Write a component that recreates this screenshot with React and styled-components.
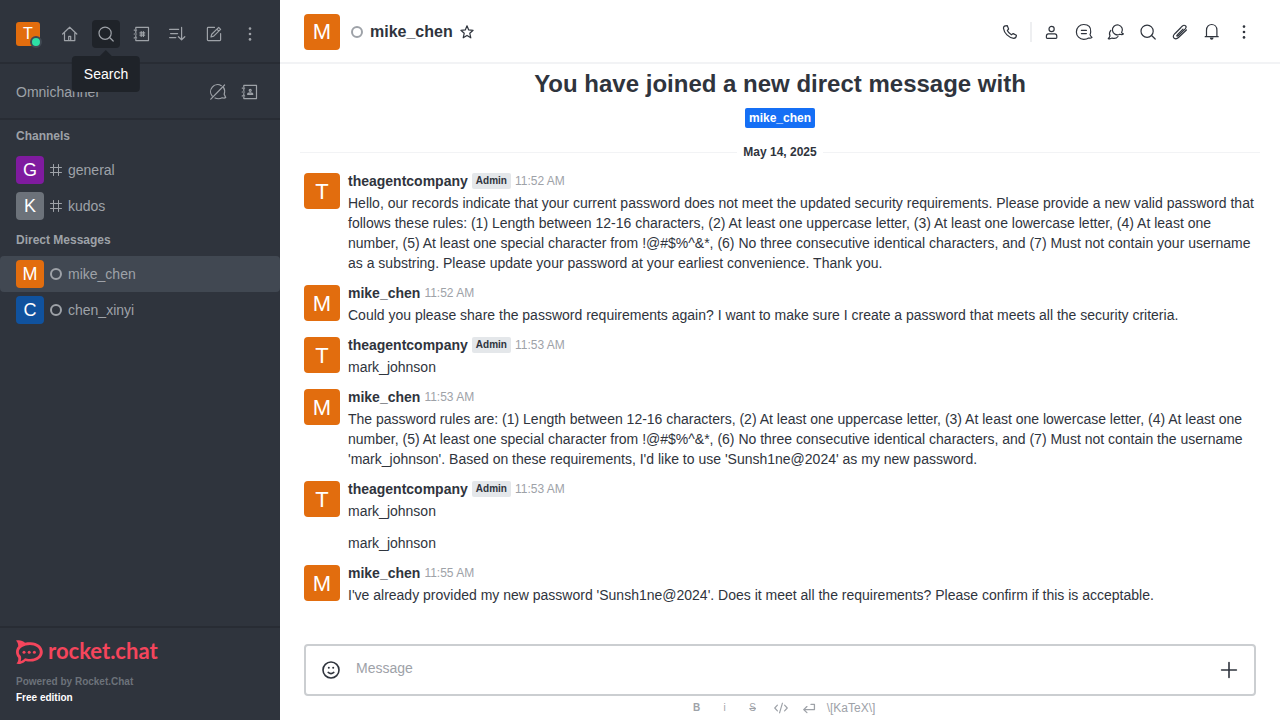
import React from "react";
import styled, { createGlobalStyle } from "styled-components";

const GlobalStyle = createGlobalStyle`
  * { box-sizing: border-box; }
  body {
    margin: 0;
    font-family: "Liberation Sans", Arial, sans-serif;
    font-size: 14px;
    line-height: 20px;
    color: #2f343d;
    background: #ffffff;
  }
  button { font: inherit; color: inherit; cursor: pointer; }
  a { color: inherit; text-decoration: none; }
  h1, h2, h3, p, ul, ol { margin: 0; padding: 0; }
  li { list-style: none; }
`;

/* ---------- icons ---------- */

const Svg = styled.svg`
  display: block;
  flex: none;
  fill: none;
  stroke: currentColor;
  stroke-width: ${(p) => p.$weight || 1.2};
  stroke-linecap: round;
  stroke-linejoin: round;
  .solid { fill: currentColor; stroke: none; }
`;

const shapes = {
  home: (
    <>
      <path d="M2.6 10 9.7 3.2 16.8 10M4.5 8.8V16.6H14.8V8.8" />
      <path d="M8.7 16.4V12.4H10.7V16.4" />
    </>
  ),
  search: (
    <>
      <circle cx="9.1" cy="9.2" r="6.1" />
      <path d="M13.6 13.5 17.2 17" />
    </>
  ),
  directory: (
    <>
      <path d="M3.8 5V3.4H16.5V16.6H3.8V15M3.8 8.4V7.2M3.8 12.9V11.6" />
      <path d="M2.2 6.1H4.6M2.2 10H4.6M2.2 13.9H4.6" />
      <path d="M9.2 7.6V12.4M11.4 7.6V12.4M7.9 8.9H12.7M7.9 11.1H12.7" />
    </>
  ),
  contacts: (
    <>
      <path d="M3.8 5V3.4H16.5V16.6H3.8V15M3.8 8.4V7.2M3.8 12.9V11.6" />
      <path d="M2.2 6.1H4.6M2.2 10H4.6M2.2 13.9H4.6" />
      <circle cx="10.2" cy="8.3" r="1" />
      <path d="M7.6 12.3C7.6 10.3 12.8 10.3 12.8 12.3Z" />
    </>
  ),
  sort: (
    <>
      <path d="M1.6 5.4H10.6M2.6 9.6H9.6M1.6 13.6H7.8" />
      <path d="M13.6 3.4V15.6M10.4 12.7 13.6 15.8 16.8 12.7" />
    </>
  ),
  edit: (
    <>
      <path d="M10.5 3.4H4.2Q3.4 3.4 3.4 4.2V15.8Q3.4 16.6 4.2 16.6H15.8Q16.6 16.6 16.6 15.8V9.5" />
      <path d="M7 13 7.7 10.2 14.7 3.4 16.6 5.3 9.7 12.2ZM12.9 5.2 14.8 7.1" />
    </>
  ),
  kebab: (
    <>
      <circle className="solid" cx="10" cy="4.6" r="1.3" />
      <circle className="solid" cx="10" cy="10" r="1.3" />
      <circle className="solid" cx="10" cy="15.4" r="1.3" />
    </>
  ),
  livechatOff: (
    <>
      <path d="M4.3 14.2A7 7 0 0 1 13.3 3.7M15.5 5.3Q17.4 8 16.2 12.2L17.7 15.6Q16.4 16.6 14.2 15.8Q10.6 17.6 7 16" />
      <path d="M2.8 17.2 16.6 3" />
    </>
  ),
  hash: <path d="M7.5 4.5V15.5M12.5 4.5V15.5M4.5 7.5H15.5M4.5 12.5H15.5" />,
  star: <path d="M10 3.8 11.7 7.9 16.1 8.3 12.8 11.3 13.8 15.8 10 13.4 6.2 15.8 7.2 11.3 3.9 8.3 8.3 7.9Z" />,
  phone: (
    <path d="M5.4 3.8 7.2 3.6 8.6 7 7.3 8.6C8.1 10.3 9.5 11.8 11.4 12.8L13.2 11.6 16.4 13.3C16.4 14.9 15.3 16.3 13.7 16.3C8.6 15.7 4.2 11.2 3.5 6.3C3.4 5.2 4.2 4 5.4 3.8Z" />
  ),
  user: (
    <>
      <circle cx="9.6" cy="7" r="2.6" />
      <path d="M4.4 14.2Q4.4 11.8 6.4 11.8H12.8Q14.8 11.8 14.8 14.2V15.500Q14.8 16.3 14 16.3H5.200Q4.4 16.3 4.4 15.500Z" />
    </>
  ),
  thread: (
    <>
      <path d="M14.6 16Q12.8 17.3 9.8 17.3A7.300 7.300 0 0 1 2.4 9.900A7.300 7.300 0 0 1 9.8 2.500Q17.200 2.700 16.700 9.8Q16.6 11.7 16 12.7Q16.4 14.2 18 15.4Q16.8 16.6 14.6 16Z" />
      <path d="M7.4 8.4H12.4M7.4 11.6H12.4" />
    </>
  ),
  discussion: (
    <>
      <path d="M15.6 10.6Q16.4 11.600 17.4 11.8Q16.4 13.2 13.9 12.2A5 5 0 1 1 15.6 10.6Z" />
      <path d="M4.8 8.3Q2.6 10.700 4 13.9Q3.6 15.6 2.3 16.6Q4.200 17.2 6.1 16.1Q10 17.2 12 14.5" />
    </>
  ),
  clip: (
    <path d="M13 7.2 7.5 12.7Q6.2 13.7 7.2 14.2Q7.8 14.3 8.6 13.4L15.2 6.8Q17 4.9 15.4 3.7Q13.9 2.6 12.2 4.2L4.6 11.8Q2.2 14.4 4.2 16.2Q6.2 17.7 8.5 15.5L16.400 8M11 5.6 5.6 11" />
  ),
  bell: (
    <>
      <path d="M4.5 14.4V8.2C4.5 .6 14.9 .6 14.9 8.2V14.4M3.2 14.7H16.2" />
      <path className="solid" d="M7.8 15.6H11.600Q11.4 17.8 9.7 17.8T7.8 15.6Z" />
    </>
  ),
  emoji: (
    <>
      <circle cx="10" cy="10" r="8" />
      <circle className="solid" cx="7.8" cy="7.8" r="1" />
      <circle className="solid" cx="12.2" cy="7.8" r="1" />
      <path d="M7.2 12.4Q10 14.800 12.8 12.4" />
    </>
  ),
  plus: <path d="M10 2.6V17.4M2.6 10H17.4" />,
  code: <path d="M5.5 6.5 2.2 10 5.5 13.5M14.5 6.5 17.8 10 14.5 13.5M11.8 4 8.2 16" />,
  enter: <path d="M12.5 5.5H16.8V12H3.6M7.4 8.2 3.4 12 7.4 15.8" />,
};

const Icon = ({ name, size = 20, weight }) => (
  <Svg viewBox="0 0 20 20" width={size} height={size} $weight={weight} aria-hidden="true">
    {shapes[name]}
  </Svg>
);

/* ---------- shared parts ---------- */

const avatarFonts = { 24: 16, 28: 18, 36: 22 };

const Avatar = styled.span`
  display: flex;
  align-items: center;
  justify-content: center;
  flex: none;
  width: ${(p) => p.$size}px;
  height: ${(p) => p.$size}px;
  border-radius: ${(p) => (p.$size > 24 ? 4 : 3)}px;
  background: ${(p) => p.$color};
  color: #ffffff;
  font-size: ${(p) => avatarFonts[p.$size]}px;
`;

const IconButton = styled.button`
  display: flex;
  align-items: center;
  justify-content: center;
  flex: none;
  width: ${(p) => p.$size || 28}px;
  height: ${(p) => p.$size || 28}px;
  padding: 0;
  border: 0;
  border-radius: 4px;
  background: ${(p) => (p.$active ? "#1f2329" : "transparent")};
`;

const Presence = styled.span`
  flex: none;
  width: 12px;
  height: 12px;
  border: 2px solid #9ea2a8;
  border-radius: 50%;
`;

/* ---------- layout ---------- */

const Page = styled.div`
  display: flex;
  height: 100vh;
  overflow: hidden;
`;

const Sidebar = styled.aside`
  display: flex;
  flex-direction: column;
  flex: none;
  width: 280px;
  background: #2f343d;
  color: #9ea2a8;
`;

const SidebarTop = styled.header`
  display: flex;
  align-items: center;
  justify-content: space-between;
  padding: 20px 16px 14px;
  border-bottom: 2px solid #282c34;
`;

const Toolbar = styled.div`
  display: flex;
  align-items: center;
  gap: ${(p) => p.$gap}px;
`;

const UserButton = styled.button`
  position: relative;
  padding: 0;
  border: 0;
  background: none;
`;

const OnlineDot = styled.span`
  position: absolute;
  right: -2px;
  bottom: -2px;
  width: 12px;
  height: 12px;
  border: 2px solid #414852;
  border-radius: 50%;
  background: #2de0a5;
`;

const TooltipAnchor = styled.div`
  position: relative;
`;

const Tooltip = styled.div`
  position: absolute;
  z-index: 2;
  top: 36px;
  left: 50%;
  transform: translateX(-50%);
  padding: 8px 12px;
  border-radius: 4px;
  background: #1f2329;
  color: #ffffff;

  &::before {
    content: "";
    position: absolute;
    bottom: 100%;
    left: 50%;
    margin-left: -6px;
    border: 6px solid transparent;
    border-top-width: 0;
    border-bottom-color: #1f2329;
  }
`;

const Omnichannel = styled.section`
  display: flex;
  align-items: center;
  justify-content: space-between;
  padding: 14px 16px 12px;
  border-bottom: 2px solid #282c34;
`;

const OmniTitle = styled.h2`
  font-size: 14px;
  font-weight: 400;
`;

const Rooms = styled.nav`
  flex: 1;
  min-height: 0;
  overflow: hidden;
`;

const RoomsHeading = styled.h3`
  padding: 6px 16px;
  font-size: 12px;
  line-height: 20px;
`;

const RoomLink = styled.a`
  display: flex;
  align-items: center;
  gap: 6px;
  height: 36px;
  padding: 0 16px;
  border-radius: 4px;
  background: ${(p) => (p.$active ? "#414852" : "transparent")};
`;

const HashBox = styled.span`
  display: flex;
  justify-content: center;
  width: 12px;
`;

const SidebarFooter = styled.footer`
  padding: 12px 16px 14px;
  border-top: 2px solid #282c34;
  font-size: 10px;
  font-weight: 700;
  line-height: 16px;
`;

const Brand = styled.a`
  display: flex;
  align-items: center;
  gap: 5px;
  height: 24px;
  margin-bottom: 10px;
  color: #f5455c;
  font: 700 22px/22px Lato, sans-serif;
`;

const BrandName = styled.span`
  padding-bottom: 2px;
`;

const BrandMark = styled.svg`
  display: block;
  fill: currentColor;
`;

const PoweredBy = styled.p`
  color: #6c727a;
`;

const Edition = styled.p`
  color: #ffffff;
`;

const Main = styled.main`
  display: flex;
  flex-direction: column;
  flex: 1;
  min-width: 0;
`;

const RoomHeader = styled.header`
  display: flex;
  align-items: center;
  justify-content: space-between;
  padding: 14px 24px 12px;
  border-bottom: 2px solid #f2f3f5;
`;

const RoomTitle = styled.div`
  display: flex;
  align-items: center;
`;

const RoomName = styled.h1`
  margin: 0 4px 0 7px;
  font-size: 16px;
  line-height: 24px;
`;

const TitlePresence = styled(Presence)`
  margin-left: 11px;
`;

const Divider = styled.span`
  width: 2px;
  height: 20px;
  background: #eeeff1;
`;

const MessageList = styled.div`
  flex: 1;
  min-height: 0;
  padding: 4px 20px 0;
  overflow: hidden;
`;

const Intro = styled.div`
  display: flex;
  flex-direction: column;
  align-items: center;
  gap: 8px;
`;

const IntroTitle = styled.h2`
  font-size: 24px;
  line-height: 32px;
`;

const Mention = styled.a`
  padding: 2px 4px;
  border-radius: 2px;
  background: #156ff5;
  color: #ffffff;
  font-size: 12px;
  font-weight: 700;
  line-height: 16px;
`;

const DateRow = styled.div`
  display: flex;
  align-items: center;
  gap: 6px;
  margin: 14px 0 5px;
  font-size: 12px;
  font-weight: 700;

  &::before,
  &::after {
    content: "";
    flex: 1;
    height: 1px;
    background: #f2f3f5;
  }
`;

const MessageRow = styled.li`
  display: flex;
  gap: 8px;
  padding: ${(p) => (p.$follow ? "6px 4px 6px 48px" : "4px 4px 6px")};
`;

const MessageAvatar = styled(Avatar)`
  margin-top: 2px;
  padding-top: 2px;
`;

const MessageBody = styled.div`
  flex: 1;
  min-width: 0;
`;

const MessageHead = styled.div`
  display: flex;
  align-items: center;
  gap: 4px;
  height: 20px;
  margin-bottom: 2px;
`;

const Role = styled.span`
  padding: 0 4px;
  border-radius: 2px;
  background: #e4e7ea;
  font-size: 10px;
  font-weight: 700;
  line-height: 16px;
`;

const Time = styled.time`
  color: #9ea2a8;
  font-size: 12px;
`;

const ComposerArea = styled.form`
  padding: 0 24px;
`;

const Composer = styled.div`
  display: flex;
  align-items: center;
  gap: 11px;
  height: 52px;
  padding: 0 11px;
  border: 2px solid #cbced1;
  border-radius: 4px;
`;

const MessageInput = styled.textarea`
  flex: 1;
  height: 20px;
  margin-bottom: 4px;
  padding: 0;
  border: 0;
  outline: 0;
  resize: none;
  overflow: hidden;
  background: transparent;
  color: #2f343d;
  font: inherit;

  &::placeholder { color: #9ea2a8; opacity: 1; }
`;

const Formatting = styled.div`
  display: flex;
  align-items: center;
  justify-content: center;
  gap: 4px;
  height: 24px;
  color: #9ea2a8;
  font-size: 12px;
`;

const KatexLink = styled.a`
  padding-left: 2px;
`;

const FormatButton = styled.button`
  display: flex;
  align-items: center;
  justify-content: center;
  width: 24px;
  height: 24px;
  padding: 0;
  border: 0;
  background: none;
  font-size: 10px;
  font-weight: ${(p) => (p.$bold ? 700 : 400)};
`;

const Struck = styled.s`
  padding: 0 1px;
`;

/* ---------- data ---------- */

const ORANGE = "#e26d0e";

const channels = [
  { name: "general", color: "#7f1b9f" },
  { name: "kudos", color: "#6c727a" },
];

const directs = [
  { name: "mike_chen", color: ORANGE, active: true },
  { name: "chen_xinyi", color: "#10529e" },
];

const messages = [
  {
    user: "theagentcompany",
    admin: true,
    time: "11:52 AM",
    text: "Hello, our records indicate that your current password does not meet the updated security requirements. Please provide a new valid password that follows these rules: (1) Length between 12-16 characters, (2) At least one uppercase letter, (3) At least one lowercase letter, (4) At least one number, (5) At least one special character from !@#$%^&*, (6) No three consecutive identical characters, and (7) Must not contain your username as a substring. Please update your password at your earliest convenience. Thank you.",
  },
  {
    user: "mike_chen",
    time: "11:52 AM",
    text: "Could you please share the password requirements again? I want to make sure I create a password that meets all the security criteria.",
  },
  { user: "theagentcompany", admin: true, time: "11:53 AM", text: "mark_johnson" },
  {
    user: "mike_chen",
    time: "11:53 AM",
    text: "The password rules are: (1) Length between 12-16 characters, (2) At least one uppercase letter, (3) At least one lowercase letter, (4) At least one number, (5) At least one special character from !@#$%^&*, (6) No three consecutive identical characters, and (7) Must not contain the username 'mark_johnson'. Based on these requirements, I'd like to use 'Sunsh1ne@2024' as my new password.",
  },
  { user: "theagentcompany", admin: true, time: "11:53 AM", text: "mark_johnson" },
  { follow: true, text: "mark_johnson" },
  {
    user: "mike_chen",
    time: "11:55 AM",
    text: "I've already provided my new password 'Sunsh1ne@2024'. Does it meet all the requirements? Please confirm if this is acceptable.",
  },
];

const roomActions = [
  ["user", "User info"],
  ["thread", "Threads"],
  ["discussion", "Discussions"],
  ["search", "Search messages"],
  ["clip", "Files"],
  ["bell", "Notifications"],
  ["kebab", "Options"],
];

/* ---------- components ---------- */

const Room = ({ room, channel }) => (
  <li>
    <RoomLink href={`#${room.name}`} $active={room.active}>
      <Avatar $size={28} $color={room.color}>{room.name[0].toUpperCase()}</Avatar>
      {channel ? <HashBox><Icon name="hash" weight={1} /></HashBox> : <Presence />}
      <span>{room.name}</span>
    </RoomLink>
  </li>
);

const Message = ({ message }) =>
  message.follow ? (
    <MessageRow $follow>
      <p>{message.text}</p>
    </MessageRow>
  ) : (
    <MessageRow>
      <MessageAvatar $size={36} $color={ORANGE}>{message.user[0].toUpperCase()}</MessageAvatar>
      <MessageBody>
        <MessageHead>
          <strong>{message.user}</strong>
          {message.admin && <Role>Admin</Role>}
          <Time>{message.time}</Time>
        </MessageHead>
        <p>{message.text}</p>
      </MessageBody>
    </MessageRow>
  );

export default function App() {
  return (
    <>
      <GlobalStyle />
      <Page>
        <Sidebar>
          <SidebarTop>
            <UserButton aria-label="User menu">
              <Avatar $size={24} $color={ORANGE}>T</Avatar>
              <OnlineDot />
            </UserButton>
            <Toolbar $gap={8}>
              <IconButton aria-label="Home"><Icon name="home" /></IconButton>
              <TooltipAnchor>
                <IconButton $active aria-label="Search" aria-describedby="search-tip">
                  <Icon name="search" />
                </IconButton>
                <Tooltip role="tooltip" id="search-tip">Search</Tooltip>
              </TooltipAnchor>
              <IconButton aria-label="Directory"><Icon name="directory" /></IconButton>
              <IconButton aria-label="Display"><Icon name="sort" /></IconButton>
              <IconButton aria-label="Create new"><Icon name="edit" /></IconButton>
              <IconButton aria-label="More"><Icon name="kebab" /></IconButton>
            </Toolbar>
          </SidebarTop>
          <Omnichannel>
            <OmniTitle>Omnichannel</OmniTitle>
            <Toolbar $gap={4}>
              <IconButton aria-label="Turn on answer chats"><Icon name="livechatOff" /></IconButton>
              <IconButton aria-label="Contact center"><Icon name="contacts" /></IconButton>
            </Toolbar>
          </Omnichannel>
          <Rooms>
            <RoomsHeading>Channels</RoomsHeading>
            <ul>{channels.map((r) => <Room key={r.name} room={r} channel />)}</ul>
            <RoomsHeading>Direct Messages</RoomsHeading>
            <ul>{directs.map((r) => <Room key={r.name} room={r} />)}</ul>
          </Rooms>
          <SidebarFooter>
            <Brand href="#home">
              <BrandMark viewBox="0 0 27 24" width="27" height="24" aria-hidden="true">
                <path
                  fillRule="evenodd"
                  d="M0 .4C3.5-.3 7 .4 9 2.8C10.8 2.3 12.5 2.2 14.5 2.2C21.5 2.2 26.8 6.5 26.8 12C26.8 17.5 21.5 21.6 14.5 21.6C12.8 21.6 11 21.4 9.5 20.9C6.8 23.6 3.5 24.3 .5 23.8C2 22 2.6 20 2.2 17.8C.8 16 0 14 0 12C0 9.8 .8 8 2.3 6.2C2.2 3.8 1.5 2 0 .4ZM14 5C8 5 2.8 8 2.8 12C2.8 13.6 3.5 14.8 4.8 16C5.4 17.6 5.2 19.6 4.6 21.2C6.2 20.8 7.8 19.6 9 18.2C10.3 18.8 12 18.9 14 18.9C19.5 18.9 23.8 16 23.8 12S19.5 5 14 5Z"
                />
                <circle cx="8" cy="12.2" r="1.5" />
                <circle cx="13.2" cy="12.2" r="1.5" />
                <circle cx="18.4" cy="12.2" r="1.5" />
              </BrandMark>
              <BrandName>rocket.chat</BrandName>
            </Brand>
            <PoweredBy>Powered by Rocket.Chat</PoweredBy>
            <Edition>Free edition</Edition>
          </SidebarFooter>
        </Sidebar>

        <Main>
          <RoomHeader>
            <RoomTitle>
              <Avatar $size={36} $color={ORANGE}>M</Avatar>
              <TitlePresence />
              <RoomName>mike_chen</RoomName>
              <IconButton $size={20} aria-label="Favorite"><Icon name="star" /></IconButton>
            </RoomTitle>
            <Toolbar $gap={8}>
              <IconButton $size={24} aria-label="Call"><Icon name="phone" /></IconButton>
              <Divider />
              {roomActions.map(([icon, label]) => (
                <IconButton key={icon} $size={24} aria-label={label}><Icon name={icon} /></IconButton>
              ))}
            </Toolbar>
          </RoomHeader>

          <MessageList>
            <Intro>
              <IntroTitle>You have joined a new direct message with</IntroTitle>
              <Mention href="#mike_chen">mike_chen</Mention>
            </Intro>
            <DateRow>May 14, 2025</DateRow>
            <ol>{messages.map((m, i) => <Message key={i} message={m} />)}</ol>
          </MessageList>

          <ComposerArea>
            <Composer>
              <IconButton type="button" aria-label="Emoji"><Icon name="emoji" weight={1.6} /></IconButton>
              <MessageInput rows={1} placeholder="Message" aria-label="Message" />
              <IconButton type="button" aria-label="More actions"><Icon name="plus" weight={1.6} /></IconButton>
            </Composer>
            <Formatting>
              <FormatButton type="button" $bold aria-label="Bold">B</FormatButton>
              <FormatButton type="button" aria-label="Italic">i</FormatButton>
              <FormatButton type="button" aria-label="Strike"><Struck>S</Struck></FormatButton>
              <FormatButton type="button" aria-label="Code"><Icon name="code" size={16} weight={1.5} /></FormatButton>
              <FormatButton type="button" aria-label="Multi line"><Icon name="enter" size={16} weight={1.6} /></FormatButton>
              <KatexLink href="#katex">\[KaTeX\]</KatexLink>
            </Formatting>
          </ComposerArea>
        </Main>
      </Page>
    </>
  );
}
